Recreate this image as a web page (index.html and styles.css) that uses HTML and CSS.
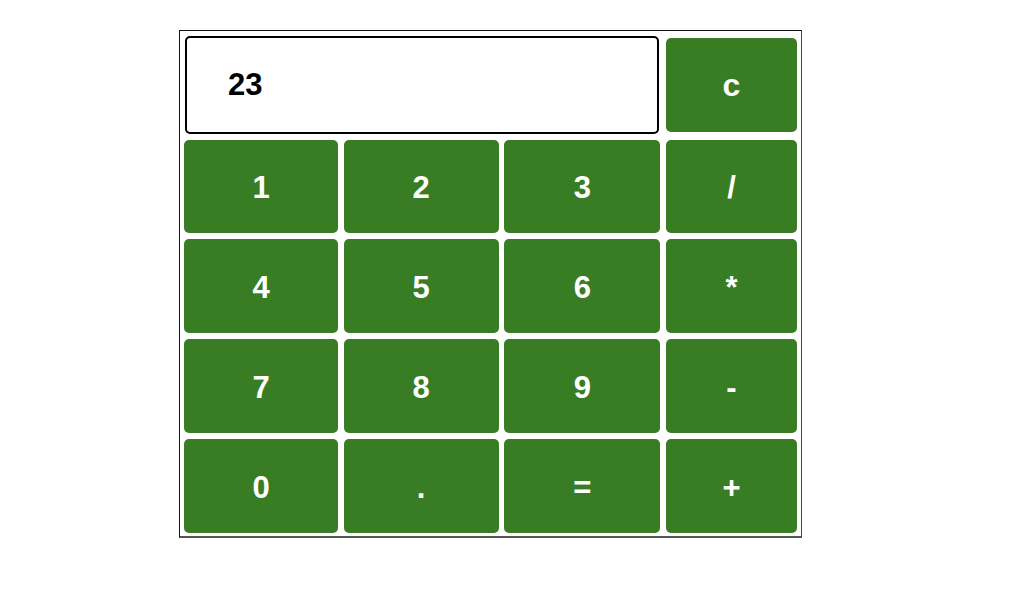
FILE: index.html
```html
<!DOCTYPE html>
<html>
<head>
<meta charset="utf-8">
<link rel="stylesheet" href="styles.css">
</head>
<body>
<div class="calc">
  <div class="display">23</div>
  <button class="key key-c">c</button>
  <button class="key">1</button>
  <button class="key">2</button>
  <button class="key">3</button>
  <button class="key">/</button>
  <button class="key">4</button>
  <button class="key">5</button>
  <button class="key">6</button>
  <button class="key">*</button>
  <button class="key">7</button>
  <button class="key">8</button>
  <button class="key">9</button>
  <button class="key">-</button>
  <button class="key">0</button>
  <button class="key">.</button>
  <button class="key">=</button>
  <button class="key">+</button>
</div>
</body>
</html>
```
FILE: styles.css
```css
html, body {
  margin: 0;
  padding: 0;
  background: #fff;
}
body {
  font-family: "Liberation Sans", Arial, sans-serif;
}
.calc {
  margin: 30px 0 0 179px;
  width: 613px;
  box-sizing: content-box;
  border: 1px solid #111;
  border-right-color: #444;
  border-bottom: 2px solid #555;
  padding: 5px 4px 3px 4px;
  display: grid;
  grid-template-columns: 154px 155px 156px 131px;
  grid-template-rows: 98px 93px 94px 94px 94px;
  column-gap: 5.67px;
  row-gap: 6px;
}
.display {
  grid-column: 1 / 4;
  margin: 0 1px;
  border: 2px solid #000;
  border-radius: 5px;
  box-sizing: border-box;
  font-weight: bold;
  font-size: 31px;
  color: #000;
  display: flex;
  align-items: center;
  padding: 0 0 0 41px;
}
.key {
  font-family: "Liberation Sans", Arial, sans-serif;
  border: none;
  margin: 0;
  border-radius: 5px;
  background: #387d23;
  color: #fff;
  font-weight: bold;
  font-size: 31px;
  padding: 3px 0 0 0;
  display: flex;
  align-items: center;
  justify-content: center;
}
.key-c {
  margin: 2px 0;
  font-size: 32px;
  padding-top: 0;
}
```
